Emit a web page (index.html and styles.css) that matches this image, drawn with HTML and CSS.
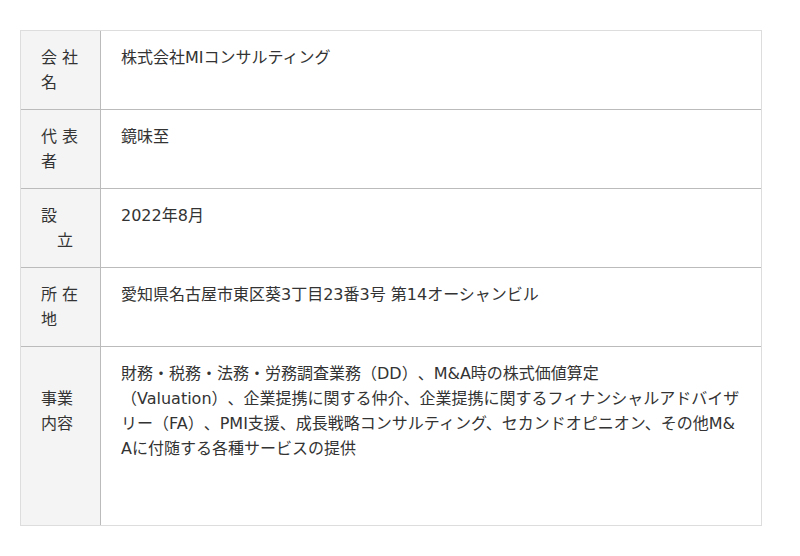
FILE: index.html
```html
<!DOCTYPE html>
<html lang="ja">
<head>
  <meta charset="UTF-8">
  <meta name="viewport" content="width=device-width, initial-scale=1.0">
  <title>会社概要</title>
  <link rel="stylesheet" href="styles.css">
</head>
<body>
  <div class="container">
    <dl class="company">
      <div class="row">
        <dt>会 社 名</dt>
        <dd>株式会社MIコンサルティング</dd>
      </div>
      <div class="row">
        <dt>代 表 者</dt>
        <dd>鏡味至</dd>
      </div>
      <div class="row">
        <dt>設<br>　立</dt>
        <dd>2022年8月</dd>
      </div>
      <div class="row">
        <dt>所 在 地</dt>
        <dd>愛知県名古屋市東区葵3丁目23番3号 第14オーシャンビル</dd>
      </div>
      <div class="row row-tall">
        <dt>事業内容</dt>
        <dd>財務・税務・法務・労務調査業務（DD）、M&amp;A時の株式価値算定<br>（Valuation）、企業提携に関する仲介、企業提携に関するフィナンシャルアドバイザリー（FA）、PMI支援、成長戦略コンサルティング、セカンドオピニオン、その他M&amp;Aに付随する各種サービスの提供</dd>
      </div>
    </dl>
  </div>
</body>
</html>
```

FILE: styles.css
```css
*{
    margin: 0;
    padding: 0;
    box-sizing: border-box;
}

body {
    font-family: "DejaVu Sans", "Noto Sans CJK JP", sans-serif;
    font-size: 16px;
    line-height: 25px;
    color: #333;
    background: #fff;
    text-spacing-trim: space-all;
}

.container{
    width: 742px;
    margin: 30px 20px;
}

.company{
    border: 1px solid #ddd;
}

.company .row{
    display: flex;
    border-bottom: 1px solid #bbb;
}

.company .row:last-child{
    border-bottom: none;
}

.company dt{
    flex: 0 0 80px;
    min-width: 0;
    background: #f4f4f4;
    border-right: 1px solid #bbb;
    padding: 14px 20px;
}

.company dd{
    flex: 1;
    min-width: 0;
    padding: 14px 18px 14px 20px;
    word-break: break-all;
}

.row-tall dt{
    padding-top: 39px;
}

.row-tall dd{
    padding-bottom: 64px;
}
```
